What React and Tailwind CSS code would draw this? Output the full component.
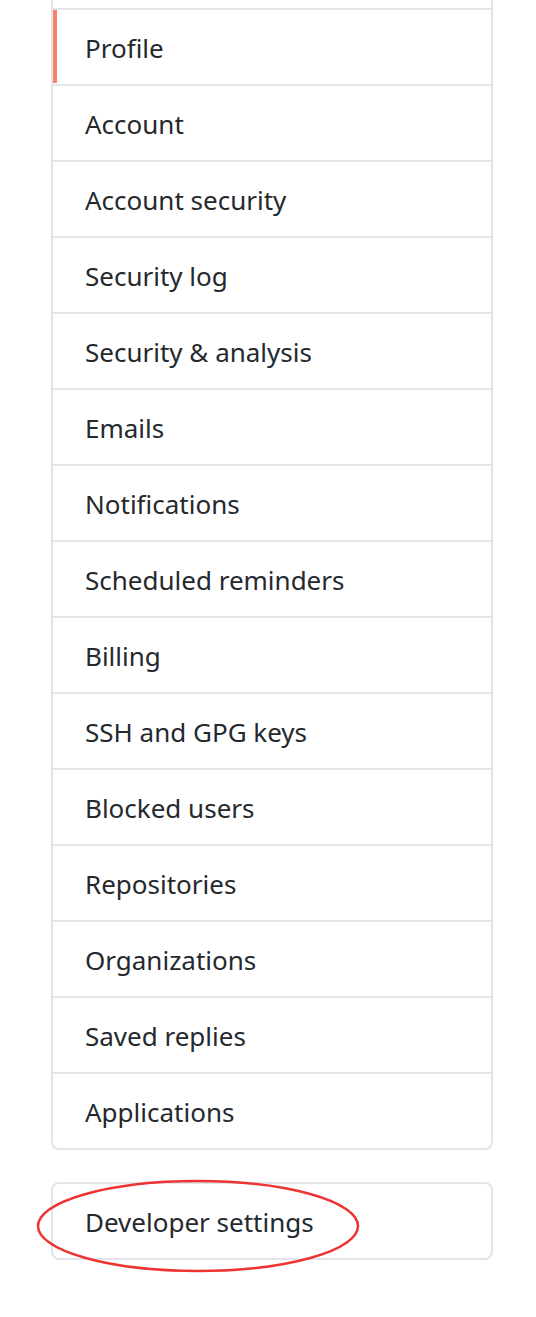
import React from "react";

const items = [
  "Profile",
  "Account",
  "Account security",
  "Security log",
  "Security & analysis",
  "Emails",
  "Notifications",
  "Scheduled reminders",
  "Billing",
  "SSH and GPG keys",
  "Blocked users",
  "Repositories",
  "Organizations",
  "Saved replies",
  "Applications",
];

export default function App() {
  return (
    <div
      className="relative min-h-[1317px] bg-white text-[#24292e]"
      style={{ fontFamily: '"Noto Sans", "Open Sans", sans-serif' }}
    >
      <div className="ml-[51px] w-[442px]">
        {/* Settings menu (top cut off) */}
        <nav className="border-x-2 border-b-2 border-[#e1e4e8] rounded-b-lg">
          <div className="h-2" />
          {items.map((label, i) => (
            <a
              key={label}
              className="relative flex h-[76px] items-center border-t-2 border-[#e1e4e8] pl-[32px] pt-[2px] text-[26px]"
            >
              {i === 0 && (
                <span className="absolute left-0 top-0 h-[73px] w-[4px] bg-[#f9826c]" />
              )}
              {label}
            </a>
          ))}
        </nav>

        {/* Developer settings */}
        <div className="mt-[32px] flex h-[78px] items-center rounded-lg border-2 border-[#e1e4e8] pl-[32px] pt-[2px] text-[26px]">
          Developer settings
        </div>
      </div>

      {/* Annotation */}
      <svg
        className="pointer-events-none absolute left-[36px] top-[1179px]"
        width="324"
        height="94"
        viewBox="0 0 324 94"
      >
        <ellipse cx="162" cy="47" rx="160" ry="45" fill="none" stroke="#ee3333" strokeWidth="2.5" />
      </svg>
    </div>
  );
}
